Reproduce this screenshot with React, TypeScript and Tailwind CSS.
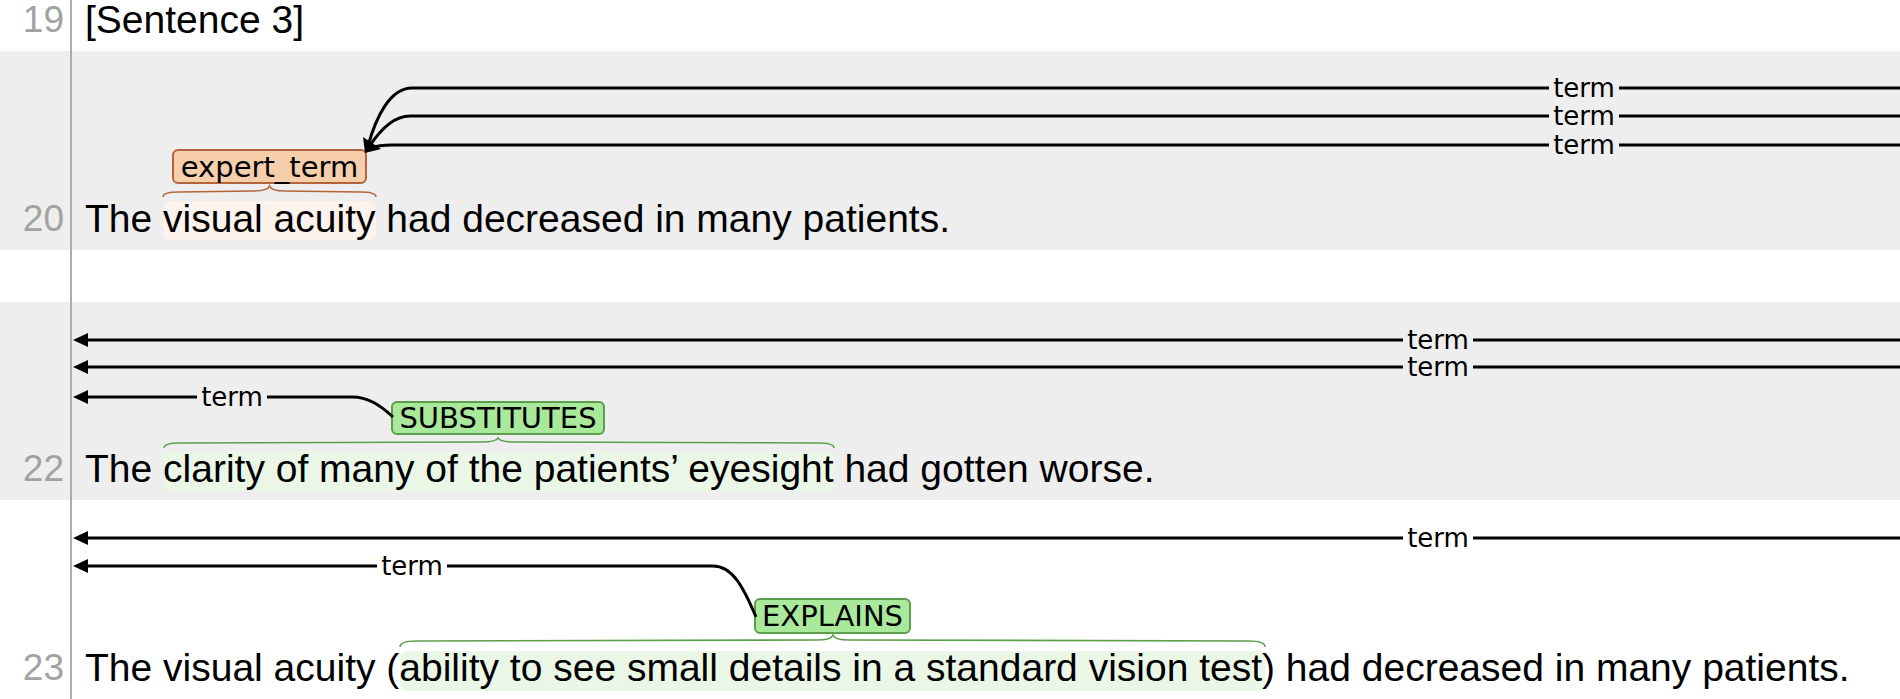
import React from "react";

const LABEL_FONT = "'DejaVu Sans', Verdana, sans-serif";

type Box = { x: number; y: number; w: number; h: number; label: string; base: number; kind: "expert" | "green" };

// curly brace drawn above an annotated span
function bracePath(x1: number, x2: number, xm: number, ye: number, yf: number, yp: number) {
  return `M${x1} ${ye} Q${x1} ${yf} ${x1 + 16} ${yf} L${xm - 16} ${yf - 1} Q${xm - 2} ${yf - 1} ${xm} ${yp} Q${xm + 2} ${yf - 1} ${xm + 16} ${yf - 1} L${x2 - 16} ${yf} Q${x2} ${yf} ${x2} ${ye}`;
}

function ArcLabel({ x, y }: { x: number; y: number }) {
  return (
    <text x={x} y={y + 9} textAnchor="middle" fontFamily={LABEL_FONT} fontSize={26} fill="#000">
      term
    </text>
  );
}

function TermLine({ y, from, to, gapAt }: { y: number; from: number; to: number; gapAt: number }) {
  return (
    <g>
      <path d={`M${from} ${y} H${gapAt - 35} M${gapAt + 35} ${y} H${to}`} stroke="#000" strokeWidth={3} fill="none" />
      <ArcLabel x={gapAt} y={y} />
    </g>
  );
}

function LeftArrow({ y }: { y: number }) {
  return <polygon points={`73,${y} 88,${y - 7} 88,${y + 7}`} fill="#000" />;
}

function SpanLabel({ b }: { b: Box }) {
  const fill = b.kind === "expert" ? "#f7ceab" : "#a9e99c";
  const stroke = b.kind === "expert" ? "#b3643b" : "#5c9e4c";
  return (
    <g>
      <rect x={b.x} y={b.y} width={b.w} height={b.h} rx={5} fill={fill} stroke={stroke} strokeWidth={2} />
      <text x={b.x + b.w / 2} y={b.base} textAnchor="middle" fontFamily={LABEL_FONT} fontSize={29} fill="#000">
        {b.label}
      </text>
    </g>
  );
}

function Row({
  num,
  shaded,
  height,
  children,
  svg,
}: {
  num?: string;
  shaded?: boolean;
  height: string;
  children?: React.ReactNode;
  svg?: React.ReactNode;
}) {
  return (
    <div className={`relative flex ${height} ${shaded ? "bg-[#eeeeee]" : "bg-white"}`}>
      {svg && (
        <svg className="absolute inset-0 h-full w-full" width="1900" height="199" viewBox="0 0 1900 199" preserveAspectRatio="xMinYMin slice">
          {svg}
        </svg>
      )}
      <div className="relative flex w-[70px] shrink-0 items-end justify-end pb-[11px] pr-[6px] font-['Liberation_Sans',Arial,sans-serif] text-[37px] leading-[40px] text-[#a2a2a2]">
        {num}
      </div>
      <div className="w-[2px] shrink-0 bg-[#acacac]" />
      <div className="relative flex flex-1 items-end whitespace-nowrap pb-[11px] pl-[13px] font-['Liberation_Sans',Arial,sans-serif] text-[39px] leading-[40px] text-black">
        {children}
      </div>
    </div>
  );
}

export default function App() {
  return (
    <div className="h-[699px] w-[1900px] overflow-hidden bg-white">
      <Row num="19" height="h-[51px]">
        [Sentence 3]
      </Row>

      <Row
        num="20"
        shaded
        height="h-[199px]"
        svg={
          <>
            <rect x={163} y={150} width={213} height={39} rx={7} fill="#fdf2ec" />
            <path d={bracePath(163, 376, 269.5, 146, 141, 135)} stroke="#b3643b" strokeWidth={1.6} fill="none" />
            <SpanLabel b={{ x: 173, y: 99, w: 193, h: 33, label: "expert_term", base: 126, kind: "expert" }} />
            <path d="M1900 37 H1619 M1549 37 H412 C390 37 376 66 368 95" stroke="#000" strokeWidth={3} fill="none" />
            <path d="M1900 65 H1619 M1549 65 H410 C392 65 378 82 369 96" stroke="#000" strokeWidth={3} fill="none" />
            <path d="M1900 94 H1619 M1549 94 H392 C382 94 376 95 371 97" stroke="#000" strokeWidth={3} fill="none" />
            <ArcLabel x={1584} y={37} />
            <ArcLabel x={1584} y={65} />
            <ArcLabel x={1584} y={94} />
            <polygon points="365,102 363,86 381,98" fill="#000" />
          </>
        }
      >
        The visual acuity had decreased in many patients.
      </Row>

      <Row height="h-[52px]" />

      <Row
        num="22"
        shaded
        height="h-[198px]"
        svg={
          <>
            <rect x={164} y={149} width={670} height={40} rx={7} fill="#ebf7e6" />
            <path d={bracePath(164, 834, 498, 146, 141, 136)} stroke="#5c9e4c" strokeWidth={1.6} fill="none" />
            <SpanLabel b={{ x: 392, y: 100, w: 212, h: 32, label: "SUBSTITUTES", base: 126, kind: "green" }} />
            <TermLine y={38} from={86} to={1900} gapAt={1438} />
            <TermLine y={65} from={86} to={1900} gapAt={1438} />
            <path d="M86 95 H197 M267 95 H352 C368 95 380 103 393 115" stroke="#000" strokeWidth={3} fill="none" />
            <ArcLabel x={232} y={95} />
            <LeftArrow y={38} />
            <LeftArrow y={65} />
            <LeftArrow y={95} />
          </>
        }
      >
        The clarity of many of the patients’ eyesight had gotten worse.
      </Row>

      <Row
        num="23"
        height="h-[199px]"
        svg={
          <>
            <rect x={400} y={151} width={865} height={40} rx={7} fill="#ebf7e6" />
            <path d={bracePath(400, 1265, 833, 147, 141, 135)} stroke="#5c9e4c" strokeWidth={1.6} fill="none" />
            <SpanLabel b={{ x: 755, y: 99, w: 155, h: 34, label: "EXPLAINS", base: 126, kind: "green" }} />
            <TermLine y={38} from={86} to={1900} gapAt={1438} />
            <path d="M86 66 H377 M447 66 H713 C732 66 743 86 756 117" stroke="#000" strokeWidth={3} fill="none" />
            <ArcLabel x={412} y={66} />
            <LeftArrow y={38} />
            <LeftArrow y={66} />
          </>
        }
      >
        The visual acuity (ability to see small details in a standard vision test) had decreased in many patients.
      </Row>
    </div>
  );
}
